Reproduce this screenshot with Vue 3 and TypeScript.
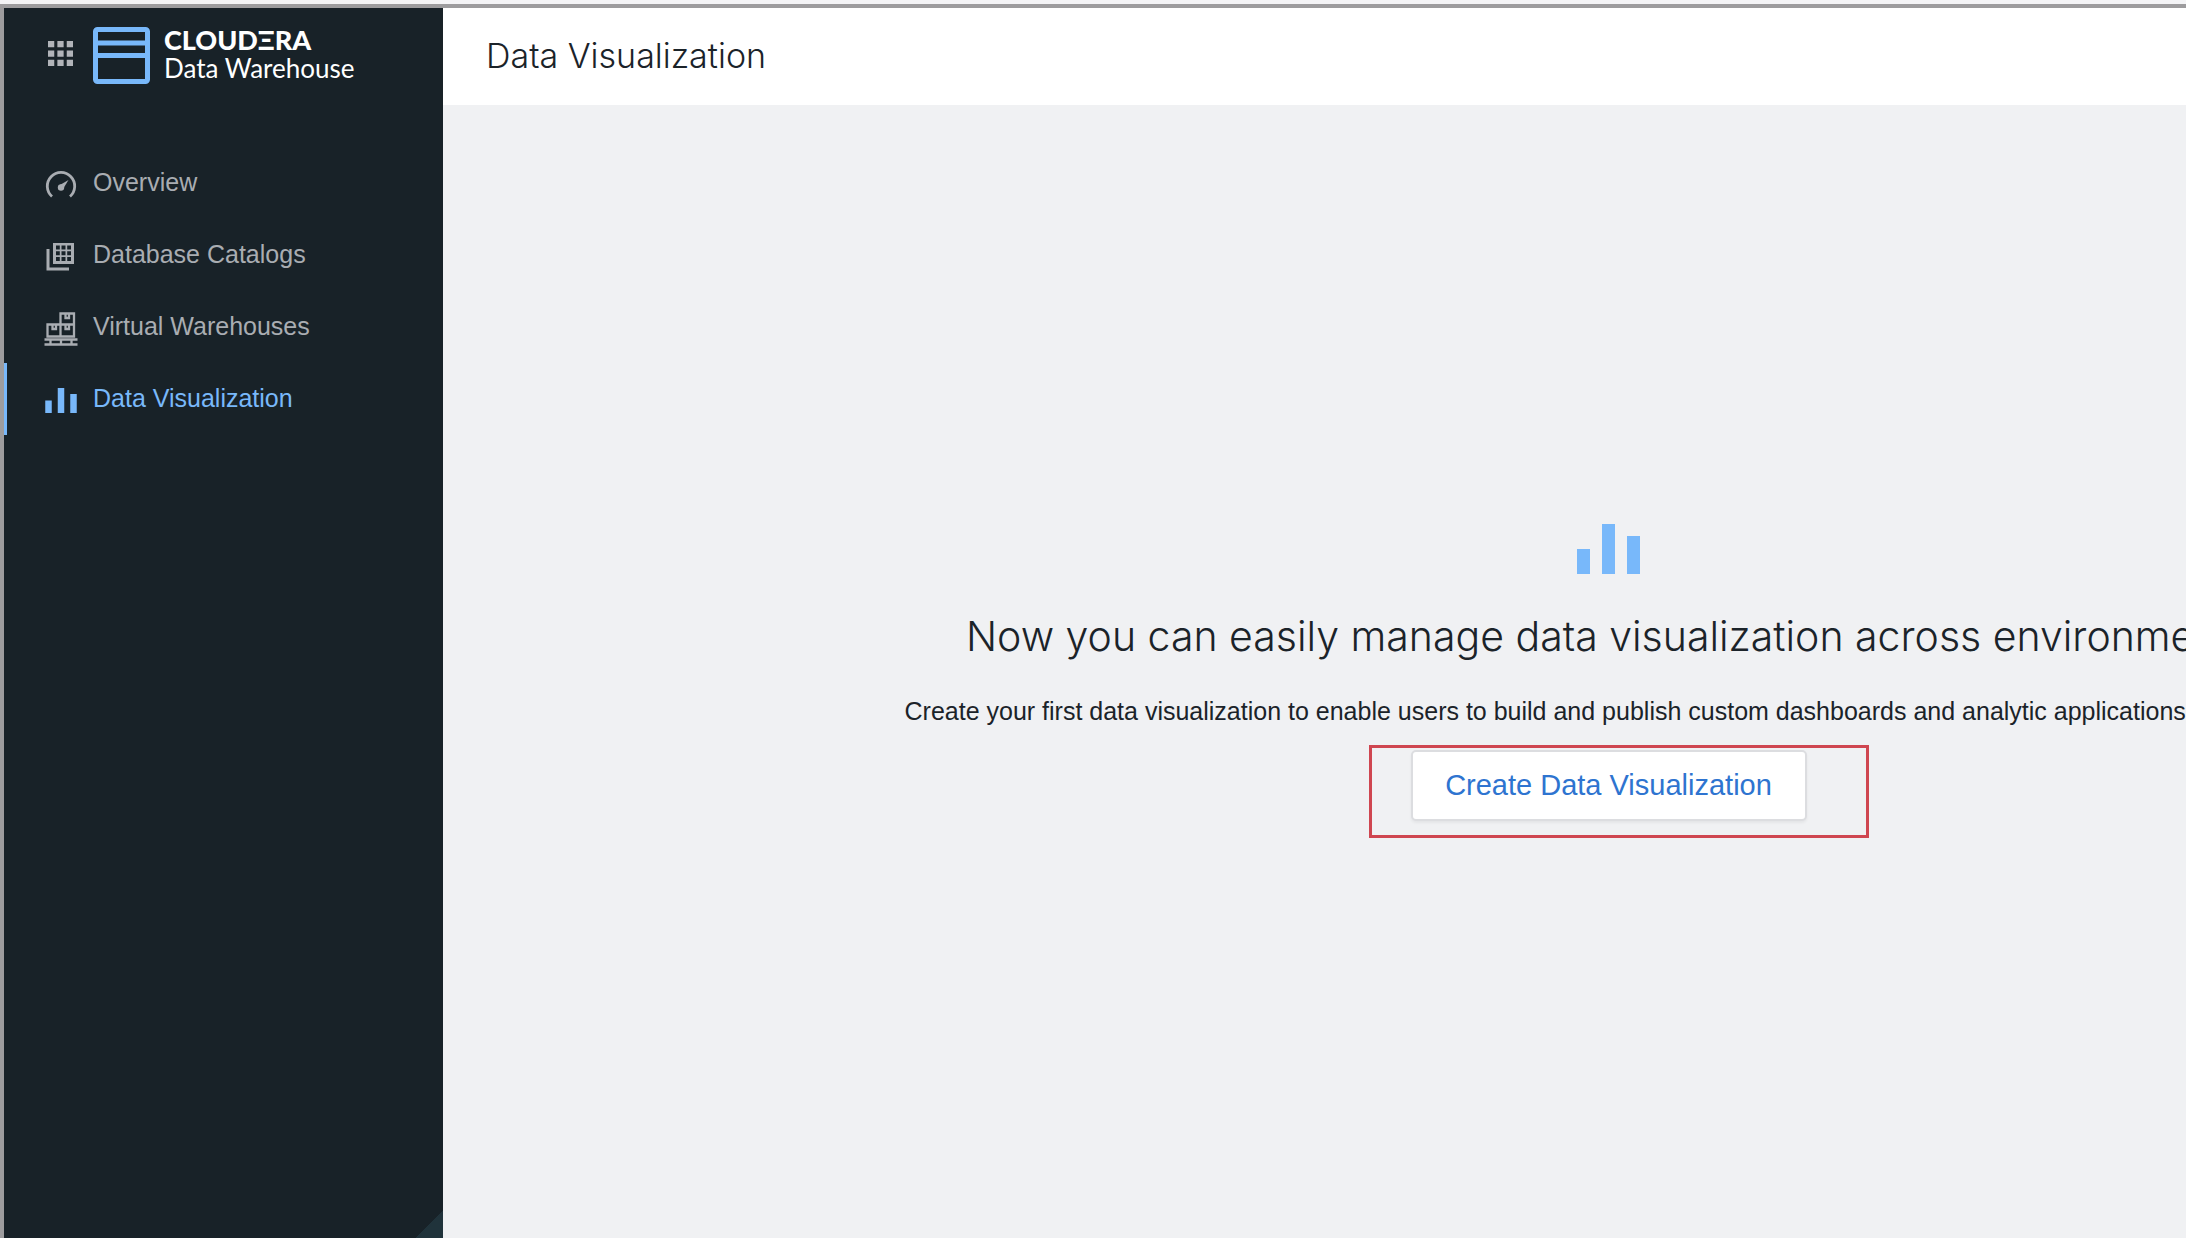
<script setup lang="ts">
import { ref } from 'vue'

interface NavItem {
  id: string
  label: string
}

const items: NavItem[] = [
  { id: 'overview', label: 'Overview' },
  { id: 'catalogs', label: 'Database Catalogs' },
  { id: 'warehouses', label: 'Virtual Warehouses' },
  { id: 'visualization', label: 'Data Visualization' },
]

const active = ref('visualization')
</script>

<template>
  <div class="frame">
    <div class="app">
      <aside class="sidebar">
        <div class="brand">
          <button class="switcher" type="button" aria-label="Switch application">
            <svg viewBox="0 0 24 24" aria-hidden="true">
              <path d="M0 0h6v6H0zM9 0h6v6H9zM18 0h6v6h-6zM0 9h6v6H0zM9 9h6v6H9zM18 9h6v6h-6zM0 18h6v6H0zM9 18h6v6H9zM18 18h6v6h-6z" />
            </svg>
          </button>
          <svg class="logo" viewBox="0 0 57 57" aria-hidden="true">
            <rect x="2.5" y="2.5" width="52" height="52" rx="2" />
            <path d="M2 16h53M2 28.5h53" />
          </svg>
          <div class="names">
            <span class="company">CLOUDΞRA</span>
            <span class="product">Data Warehouse</span>
          </div>
        </div>
        <nav class="nav">
          <a
            v-for="item in items"
            :key="item.id"
            href="#"
            class="link"
            :class="{ active: item.id === active }"
            @click.prevent="active = item.id"
          >
            <svg v-if="item.id === 'overview'" class="icon" viewBox="0 0 34 34" aria-hidden="true">
              <path class="line" d="M8 28.500A13.700 13.700 0 1 1 26 28.500" stroke-width="2.8" />
              <circle cx="17" cy="19.500" r="3.200" />
              <path d="M15 17.500 24.500 12l-5.500 9z" />
            </svg>
            <svg v-else-if="item.id === 'catalogs'" class="icon" viewBox="0 0 34 34" aria-hidden="true">
              <path class="line" d="M4 9v20h21" stroke-width="3" />
              <path
                fill-rule="evenodd"
                d="M9 3h21v21H9zM12 5.500v4h3.800v-4zM17.500 5.500v4h4v-4zM23.200 5.500v4H27v-4zM12 11.200v4h3.800v-4zM17.500 11.200v4h4v-4zM23.200 11.200v4H27v-4zM12 17v4h3.800v-4zM17.500 17v4h4v-4zM23.200 17v4H27v-4z"
              />
            </svg>
            <svg v-else-if="item.id === 'warehouses'" class="icon" viewBox="0 0 34 34" aria-hidden="true">
              <path
                class="line"
                stroke-width="2.3"
                d="M16.500 12.500V1.500h13.500v23H3.500v-12H30M16.500 12.500v12M21.500 2v4h3.500V2M8.500 13v4H12v-4M21.500 13v4h3.500v-4M.5 27.500h33M.5 32.500h33M6.500 28v4M17 28v4M27.500 28v4"
              />
            </svg>
            <svg v-else class="icon bars" viewBox="0 0 63 50" aria-hidden="true">
              <path d="M0 25h13v25H0zM25 0h13v50H25zM50 12h13v38H50z" />
            </svg>
            <span class="label">{{ item.label }}</span>
          </a>
        </nav>
      </aside>

      <main class="main">
        <header class="header">
          <h1>Data Visualization</h1>
        </header>
        <section class="stage">
          <div class="empty">
            <svg class="chart" viewBox="0 0 63 50" aria-hidden="true">
              <path d="M0 25h13v25H0zM25 0h13v50H25zM50 12h13v38H50z" />
            </svg>
            <h2>Now you can easily manage data visualization across environments.</h2>
            <p>Create your first data visualization to enable users to build and publish custom dashboards and analytic applications</p>
            <div class="action">
              <button class="create" type="button">Create Data Visualization</button>
            </div>
          </div>
        </section>
      </main>
    </div>
  </div>
</template>

<style>
body {
  margin: 0;
  overflow: hidden;
}
</style>

<style scoped>
.frame {
  box-sizing: border-box;
  height: 100vh;
  padding-top: 4px;
  background: #f4f4f6;
  font-family: "Liberation Sans", Arial, sans-serif;
  color: #1b2329;
  overflow: hidden;
}

.app {
  box-sizing: border-box;
  display: flex;
  height: 100%;
  border-top: 4px solid #9d9c9e;
  border-left: 4px solid #9d9c9e;
}

.sidebar {
  flex: 0 0 439px;
  background: linear-gradient(135deg, transparent 50%, #20333b 50%) right bottom / 27px 27px no-repeat #182228;
}

.brand {
  display: flex;
  align-items: center;
  height: 94px;
  padding-left: 44px;
}

.switcher {
  padding: 0 0 4px;
  border: 0;
  background: none;
  line-height: 0;
  cursor: pointer;
}

.switcher svg {
  width: 25px;
  height: 25px;
  fill: #b1b4b9;
}

.logo {
  width: 57px;
  height: 57px;
  margin-left: 20px;
  fill: none;
  stroke: #78b8fa;
  stroke-width: 5;
}

.names {
  display: flex;
  flex-direction: column;
  margin-left: 14px;
  padding-bottom: 2px;
  font-family: Lato, sans-serif;
  color: #fff;
  line-height: 28px;
  white-space: nowrap;
}

.company {
  font-size: 27px;
  font-weight: 900;
}

.product {
  font-size: 26px;
}

.nav {
  padding-top: 45px;
}

.link {
  box-sizing: border-box;
  display: flex;
  align-items: center;
  gap: 15px;
  height: 72px;
  padding-left: 37px;
  border-left: 3px solid transparent;
  color: #a9adb2;
  font-size: 25px;
  text-decoration: none;
}

.link.active {
  border-left-color: #78b8fa;
  color: #78b8fa;
}

.label {
  padding-bottom: 2px;
}

.icon {
  width: 34px;
  height: 34px;
  padding-top: 4px;
  fill: currentColor;
}

.icon.bars {
  box-sizing: border-box;
  height: 27px;
  padding: 2px 1px 0;
}

.line {
  fill: none;
  stroke: currentColor;
}

.main {
  display: flex;
  flex: 1;
  flex-direction: column;
  min-width: 0;
  background: #f0f1f3;
  overflow: hidden;
}

.header {
  box-sizing: border-box;
  display: flex;
  flex: 0 0 97px;
  align-items: center;
  padding: 0 0 2px 43px;
  background: #fff;
}

h1,
h2 {
  margin: 0;
  font-family: Inter, sans-serif;
  font-weight: 300;
}

h1 {
  font-size: 34px;
}

/* The canvas is wider than the visible pane, so its centre sits right of the pane's. */
.stage {
  box-sizing: border-box;
  display: flex;
  flex: 1;
  align-items: center;
  justify-content: center;
  width: calc(100% + 588px);
  padding-top: 18px;
}

.empty {
  display: flex;
  flex-direction: column;
  align-items: center;
  width: 1408px;
  white-space: nowrap;
}

.chart {
  width: 63px;
  height: 50px;
  fill: #78b8fa;
}

h2 {
  margin-top: 36px;
  padding-left: 12px;
  font-size: 41px;
  line-height: 52px;
}

p {
  align-self: flex-start;
  margin: 33px 0 0;
  font-size: 25px;
  line-height: 32px;
}

.action {
  box-sizing: border-box;
  width: 500px;
  height: 93px;
  margin: 18px 0 0 20px;
  padding: 2px 0 0 39px;
  border: 3px solid #cf4650;
}

.create {
  box-sizing: border-box;
  width: 396px;
  height: 71px;
  padding: 0;
  border: 2px solid #dcdde0;
  border-radius: 5px;
  background: #fff;
  box-shadow: 0 2px 3px rgba(0, 0, 0, 0.05);
  color: #2e74d0;
  font-family: inherit;
  font-size: 29px;
  cursor: pointer;
}
</style>
